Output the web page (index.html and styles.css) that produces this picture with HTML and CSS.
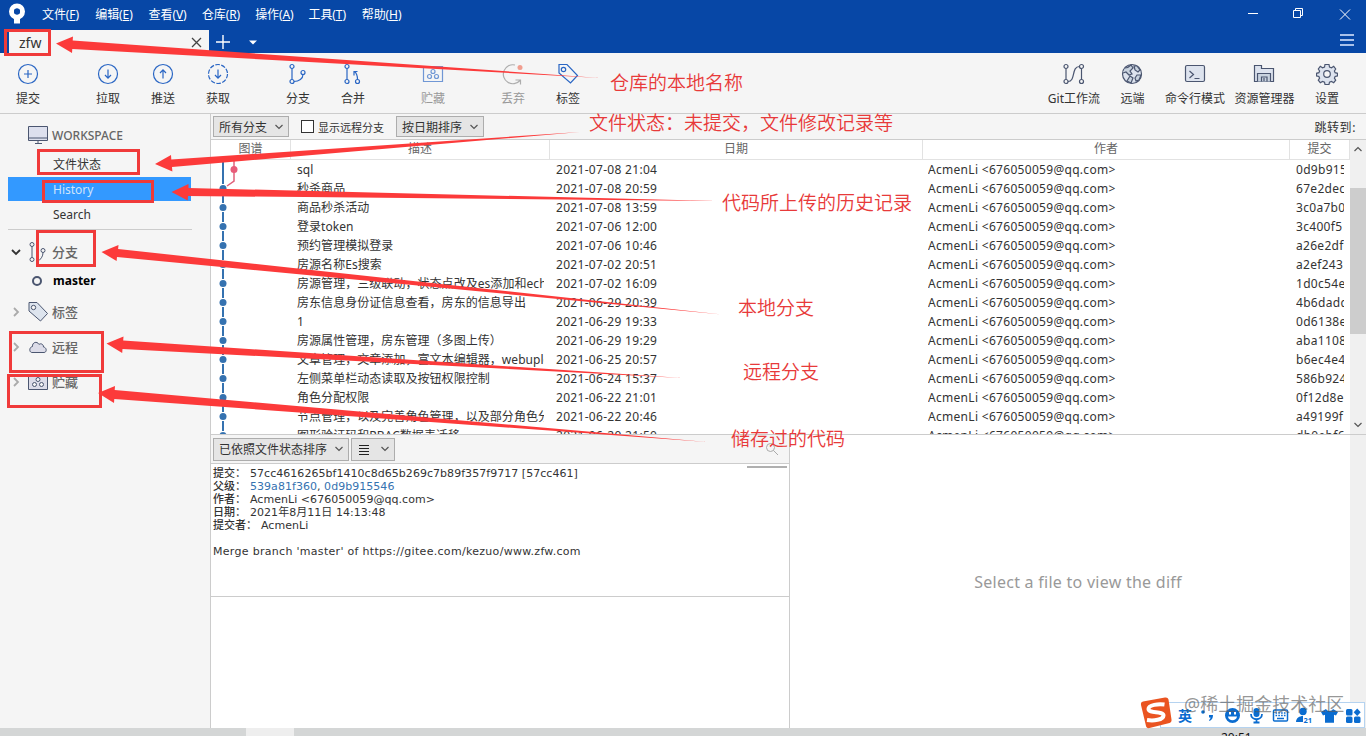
FILE: index.html
```
<!DOCTYPE html>
<html lang="zh-CN">
<head>
    <meta charset="UTF-8">
    <title>zfw</title>
    <link rel="stylesheet" href="styles.css">
    <script src="script.js" defer></script>
</head>
<body>
    <div class="titlebar">
        <svg class="logo" width="18" height="22" viewBox="0 0 18 22">
            <path d="M6 12h6v8.500h-6z" fill="#fff"/>
            <circle cx="9" cy="8.500" r="5.500" fill="none" stroke="#fff" stroke-width="5"/>
            <circle cx="9" cy="8.500" r="3" fill="#0747a6"/>
        </svg>
        <div class="menu">
            <span>文件(<u>F</u>)</span>
            <span>编辑(<u>E</u>)</span>
            <span>查看(<u>V</u>)</span>
            <span>仓库(<u>R</u>)</span>
            <span>操作(<u>A</u>)</span>
            <span>工具(<u>T</u>)</span>
            <span>帮助(<u>H</u>)</span>
        </div>
        <svg class="window-buttons" width="110" height="30" viewBox="0 0 110 30" fill="none" stroke="#fff">
            <path d="M0 14.500h10"/>
            <path d="M45.500 11.500h7v7h-7zM47.500 11.500v-2h7v7h-2"/>
            <path d="M92 10.500l10 10M102 10.500l-10 10"/>
        </svg>
    </div>
    <div class="tabs">
        <div class="tab">
            <span>zfw</span>
            <svg width="11" height="11" viewBox="0 0 11 11" stroke="#444" stroke-width="1.300"><path d="M1 1l9 9M10 1l-9 9"/></svg>
        </div>
        <svg class="tab-add" width="50" height="22" viewBox="0 0 50 22">
            <path d="M14 5v14M7 12h14" stroke="#fff" stroke-width="1.400"/>
            <path d="M40 10.500h8l-4 4z" fill="#fff"/>
        </svg>
        <svg class="burger" width="14" height="14" viewBox="0 0 14 14" stroke="#a9c1ea" stroke-width="1.800"><path d="M0 2h14M0 7h14M0 12h14"/></svg>
    </div>

    <div class="toolbar">
        <div class="group">
            <div class="tool"><svg viewBox="0 0 22 22"><circle cx="11" cy="11" r="9.500"/><path d="M11 7v8M7 11h8"/></svg>提交</div>
        </div>
        <div class="group">
            <div class="tool"><svg viewBox="0 0 22 22"><circle cx="11" cy="11" r="9.500"/><path d="M11 6.500v8.500M8 12l3 3.200 3-3.200"/></svg>拉取</div>
            <div class="tool"><svg viewBox="0 0 22 22"><circle cx="11" cy="11" r="9.500"/><path d="M11 15.500v-8.500M8 10l3-3.200 3 3.200"/></svg>推送</div>
            <div class="tool"><svg viewBox="0 0 22 22"><circle cx="11" cy="11" r="9.500" stroke-dasharray="4.500 1.470"/><path d="M11 6.500v8.500M8 12l3 3.200 3-3.200"/></svg>获取</div>
        </div>
        <div class="group">
            <div class="tool"><svg viewBox="0 0 22 22"><circle cx="5" cy="3.500" r="2"/><circle cx="5" cy="18.500" r="2"/><circle cx="16" cy="9.500" r="2"/><path d="M5 5.500v11M16 11.500c0 4-4 7-9 7"/></svg>分支</div>
            <div class="tool"><svg viewBox="0 0 22 22"><circle cx="5" cy="3.500" r="2"/><circle cx="5" cy="18.500" r="2"/><circle cx="15.500" cy="18.500" r="2"/><path d="M5 5.500v11M15.500 16.500c0-4-.5-6-3-8M12 12.500v-4h3.500"/></svg>合并</div>
        </div>
        <div class="group">
            <div class="tool disabled"><svg viewBox="0 0 22 22"><path d="M1.500 3.500h19v15h-19z"/><circle cx="11" cy="8.500" r="2"/><circle cx="7.500" cy="13.500" r="2"/><circle cx="14.500" cy="13.500" r="2"/></svg>贮藏</div>
        </div>
        <div class="group">
            <div class="tool disabled discard"><svg viewBox="0 0 22 22"><path d="M13 2a9.500 9.500 0 1 0 5 15.500M13.500 17h5v4.500"/><circle class="spot" cx="18" cy="4.500" r="2.500"/></svg>丢弃</div>
            <div class="tool"><svg viewBox="0 0 22 22"><path d="M2 1.500h8l10.500 11-7 7.500-11.500-10z"/><circle cx="6.500" cy="6.500" r="2.200"/></svg>标签</div>
        </div>
        <div class="group right">
            <div class="tool"><svg viewBox="0 0 22 22"><circle cx="3" cy="3.500" r="2"/><circle cx="3" cy="18.500" r="2"/><circle cx="18.500" cy="3.500" r="2"/><circle cx="18.500" cy="18.500" r="2"/><path d="M3 5.500v11M18.500 5.500v11M5 18.500c8 0 3-15 11.500-15"/></svg>Git工作流</div>
            <div class="tool"><svg viewBox="0 0 22 22"><circle class="soft" cx="11" cy="11" r="9.500"/><path class="land" d="M4 5c2 0 4-1 6-3l2 3-3 3 2 3-3 1-3-3-3 1M13 3l3 0 3 4-2 2-3-2zM16 12l4 0-2 5-3 1-1-3zM9 13l3 2-2 5-4-2z"/></svg>远端</div>
            <div class="tool"><svg viewBox="0 0 22 22"><rect class="soft" x="1.500" y="2.500" width="19" height="16" rx="1.500"/><path d="M5.500 8l4 3.500-4 3.500M10.500 15.500h5"/></svg>命令行模式</div>
            <div class="tool"><svg viewBox="0 0 22 22"><path class="soft" d="M1.500 2.500h7v3h12v13h-19z"/><path class="land" d="M4.500 18.500v-8h13v8M8.500 18.500v-4.500h5.500v4.500M11 15v3"/></svg>资源管理器</div>
            <div class="tool"><svg viewBox="0 0 22 22"><path class="soft" d="M9 1.500h4l.5 2.500 2 .8 2.200-1.500 2 2.700-1.300 2 .7 1.700 2.400.6v2.600l-2.400.6-.7 1.700 1.300 2-2 2.500-2.200-1.300-2 .8-.5 2.300h-4l-.5-2.300-2-.8-2.200 1.300-2-2.500 1.300-2-.7-1.700-2.400-.6v-2.600l2.400-.6.7-1.700-1.300-2 2-2.700 2.200 1.500 2-.8z"/><circle cx="11" cy="11" r="3.300" fill="#f5f5f5"/></svg>设置</div>
        </div>
    </div>

    <div class="main">
        <div class="sidebar">
            <div class="side-head workspace">
                <svg width="22" height="20" viewBox="0 0 22 20" fill="#dde0ee" stroke="#4b5670"><path d="M1.500 1.500h19v14h-19z"/><path d="M1.500 13h19M8 18.500h7M11 16v2"/></svg>
                WORKSPACE
            </div>
            <div class="side-item">文件状态</div>
            <div class="side-item selected">History</div>
            <div class="side-item">Search</div>
            <div class="side-line"></div>
            <div class="side-head first">
                <svg class="chevron open" width="10" height="8" viewBox="0 0 10 8"><path d="M1 2l4 4 4-4"/></svg>
                <svg width="22" height="22" viewBox="0 0 22 22" fill="none" stroke="#4b5670"><circle cx="5" cy="3.500" r="2"/><circle cx="5" cy="18.500" r="2"/><circle cx="16" cy="9.500" r="2"/><path d="M5 5.500v11M16 11.500c0 4-2 6-4 8"/></svg>
                分支
            </div>
            <div class="side-item master"><i></i>master</div>
            <div class="side-head">
                <svg class="chevron" width="10" height="10" viewBox="0 0 10 10"><path d="M3 1l4 4-4 4"/></svg>
                <svg width="22" height="22" viewBox="0 0 22 22" fill="#dde4ee" stroke="#4b5670"><path d="M2 1.500h8l10.500 11-7 7.500-11.500-10z"/><circle cx="6.500" cy="6.500" r="2.200" fill="#f5f5f5"/></svg>
                标签
            </div>
            <div class="side-head">
                <svg class="chevron" width="10" height="10" viewBox="0 0 10 10"><path d="M3 1l4 4-4 4"/></svg>
                <svg width="22" height="22" viewBox="0 0 22 22" fill="#dcdce8" stroke="#4b5670"><path d="M5 16.500h12c3 0 3-5-.5-5.500 0-3-3-4-4.500-2.500-2-4-7-2-6.500 2-3.500.5-3.500 6-.5 6z"/></svg>
                远程
            </div>
            <div class="side-head">
                <svg class="chevron" width="10" height="10" viewBox="0 0 10 10"><path d="M3 1l4 4-4 4"/></svg>
                <svg width="22" height="22" viewBox="0 0 22 22" fill="#dcdce8" stroke="#4b5670"><path d="M1.500 3.500h19v15h-19z"/><g fill="#f5f5f5"><circle cx="11" cy="8.500" r="2"/><circle cx="7.500" cy="13.500" r="2"/><circle cx="14.500" cy="13.500" r="2"/></g></svg>
                贮藏
            </div>
        </div>

        <div class="content">
            <div class="filters">
                <div class="select all">所有分支<svg viewBox="0 0 8 6"><path d="M.5 1l3.500 3.500 3.500-3.500"/></svg></div>
                <div class="check"><i></i>显示远程分支</div>
                <div class="select sort">按日期排序<svg viewBox="0 0 8 6"><path d="M.5 1l3.500 3.500 3.500-3.500"/></svg></div>
                <span class="jump">跳转到:</span>
            </div>
            <div class="log">
                <div class="log-table">
                    <div class="log-row log-header">
                        <span>图谱</span><span>描述</span><span>日期</span><span>作者</span><span>提交</span>
                    </div>
                    <div class="log-body" id="log"></div>
                </div>
                <div class="scrollbar">
                    <svg viewBox="0 0 8 6"><path d="M.5 5l3.500-3.500 3.500 3.500"/></svg>
                    <div class="thumb"></div>
                    <svg viewBox="0 0 8 6"><path d="M.5 1l3.500 3.500 3.500-3.500"/></svg>
                </div>
            </div>
            <div class="bottom">
                <div class="details">
                    <div class="details-bar">
                        <div class="select status">已依照文件状态排序<svg viewBox="0 0 8 6"><path d="M.5 1l3.500 3.500 3.500-3.500"/></svg></div>
                        <div class="select lines"><svg class="list" viewBox="0 0 10 11"><path d="M0 1.500h10M0 4.500h10M0 7.500h10M0 10.500h10"/></svg><svg viewBox="0 0 8 6"><path d="M.5 1l3.500 3.500 3.500-3.500"/></svg></div>
                        <svg class="search" width="14" height="14" viewBox="0 0 14 14" fill="none" stroke="#aaa"><circle cx="5.500" cy="5.500" r="4"/><path d="M8.500 8.500l4.500 4.500"/></svg>
                    </div>
                    <div class="commit">
                        <div><b>提交：</b>57cc4616265bf1410c8d65b269c7b89f357f9717 [57cc461]</div>
                        <div><b>父级：</b><a>539a81f360</a>, <a>0d9b915546</a></div>
                        <div><b>作者：</b>AcmenLi &lt;676050059@qq.com&gt;</div>
                        <div><b>日期：</b>2021年8月11日 14:13:48</div>
                        <div><b class="wide">提交者：</b>AcmenLi</div>
                        <div class="message">Merge branch 'master' of https://gitee.com/kezuo/www.zfw.com</div>
                        <i class="grip"></i>
                    </div>
                    <div class="files"></div>
                </div>
                <div class="diff">Select a file to view the diff</div>
                <div class="diff-track"></div>
            </div>
        </div>
    </div>

    <div class="taskbar"><div class="task"></div><span class="clock">20:51</span></div>

    <!-- input method bar -->
    <div class="ime">
        <span>英</span>
        <svg width="17" height="17" viewBox="0 0 17 17"><circle cx="4" cy="5" r="1.800"/><path d="M10 8h4c0 3-1 5-3.500 6l-.5-1c1-.7 1.500-1.500 1.500-2.500h-1.500z"/></svg>
        <svg width="17" height="17" viewBox="0 0 17 17"><circle cx="8.500" cy="8.500" r="7.500"/><path d="M4 9.500h9c-.5 5-8.500 5-9 0zM5 5h2v2.500h-2zM10 5h2v2.500h-2z" fill="#fff"/></svg>
        <svg width="17" height="17" viewBox="0 0 17 17"><rect x="5.500" y="1" width="6" height="9" rx="3"/><path d="M3 7c0 7 11 7 11 0M8.500 12v4M5.500 15.500h6" fill="none" stroke="#0a6cd0" stroke-width="1.800"/></svg>
        <svg width="17" height="17" viewBox="0 0 17 17"><rect x="1.500" y="3" width="14" height="11" rx="1" fill="none" stroke="#0a6cd0" stroke-width="1.500"/><path d="M3.500 6h10M3.500 8.500h10" stroke="#0a6cd0" stroke-width="1.500" stroke-dasharray="1.600 1.200"/><path d="M5 11.500h7" stroke="#0a6cd0" stroke-width="1.500"/></svg>
        <svg width="17" height="17" viewBox="0 0 17 17"><circle cx="7" cy="4.500" r="3.700"/><path d="M0 15c0-8 14-8 14 0z"/><rect x="7" y="8.500" width="10" height="8" fill="#fff"/><text x="7.500" y="15.500" font-size="7.500" font-weight="bold">21</text></svg>
        <svg width="17" height="17" viewBox="0 0 17 17"><path d="M5 2c1 2.500 6 2.500 7 0l5 3-2 3.500-2-.8v8h-9v-8l-2 .8-2-3.500z"/></svg>
        <svg width="17" height="17" viewBox="0 0 17 17"><rect x="1" y="2" width="6.500" height="6.500" rx="1.500"/><rect x="1" y="9.500" width="6.500" height="6.500" rx="1.500"/><rect x="9" y="9.500" width="6.500" height="6.500" rx="1.500"/><path d="M12.200 1.500l3.500 3.700-3.500 3.700-3.500-3.700z"/></svg>
    </div>
    <svg class="sogou" width="32" height="32" viewBox="0 0 32 32">
        <path d="M3 4.500l22-4c2-.3 3 .5 3.500 2l3 20c.3 2-.5 3-2 3.500l-20 5c-2 .5-3-.3-3.500-2l-5-21c-.3-2 .5-3.200 2-3.500z" fill="#ea5421"/>
        <path d="M24.500 7.500c-6-.8-16 .2-16 4.500 0 4.500 15 2 15 6.500-.3 4.500-10 5.500-16.500 4.500" fill="none" stroke="#fff" stroke-width="4"/>
    </svg>
    <div class="watermark">@稀土掘金技术社区</div>

    <!-- annotations -->
    <svg class="arrows" width="1366" height="736" viewBox="0 0 1366 736">
        <g fill="none" stroke="#f03a3a" stroke-width="3">
            <rect x="5.500" y="30.500" width="44" height="24"/>
            <rect x="38.500" y="150.500" width="100" height="23"/>
            <rect x="43.500" y="181.500" width="109" height="20"/>
            <rect x="37.500" y="231.500" width="57" height="34"/>
            <rect x="10.500" y="332.500" width="92" height="39"/>
            <rect x="8.500" y="375.500" width="92" height="31"/>
        </g>
        <g fill="#fc3a3a">
            <path d="M56 43.500l17-7-.3 4L600 78 72.300 49l-.3 4z"/>
            <path d="M155 164l16-9 .3 4.500L580 132 172 167l.4 4.500z"/>
            <path d="M171.500 192l17-8v4L717 201l-529-5-.3 4.500z"/>
            <path d="M101.500 252l17-7-.4 4L722 314.500 117 257l-.4 4z"/>
            <path d="M106.500 343.500l17-7-.3 4L682 378 122.500 349l-.3 4z"/>
            <path d="M98 393l17-7-.3 4L707 442 114.300 399l-.3 4z"/>
        </g>
    </svg>
    <div class="note n1">仓库的本地名称</div>
    <div class="note n2">文件状态：未提交，文件修改记录等</div>
    <div class="note n3">代码所上传的历史记录</div>
    <div class="note n4">本地分支</div>
    <div class="note n5">远程分支</div>
    <div class="note n6">储存过的代码</div>
</body>
</html>
```
FILE: script.js
```
var commits = [
    ['sql', '2021-07-08 21:04', '0d9b915'],
    ['秒杀商品', '2021-07-08 20:59', '67e2dec'],
    ['商品秒杀活动', '2021-07-08 13:59', '3c0a7b0'],
    ['登录token', '2021-07-06 12:00', '3c400f5'],
    ['预约管理模拟登录', '2021-07-06 10:46', 'a26e2df'],
    ['房源名称Es搜索', '2021-07-02 20:51', 'a2ef243'],
    ['房源管理，三级联动，状态点改及es添加和echarts', '2021-07-02 16:09', '1d0c54e'],
    ['房东信息身份证信息查看，房东的信息导出', '2021-06-29 20:39', '4b6dadd'],
    ['1', '2021-06-29 19:33', '0d6138e'],
    ['房源属性管理，房东管理（多图上传）', '2021-06-29 19:29', 'aba1108'],
    ['文章管理，文章添加，富文本编辑器，webuploader', '2021-06-25 20:57', 'b6ec4e4'],
    ['左侧菜单栏动态读取及按钮权限控制', '2021-06-24 15:37', '586b924'],
    ['角色分配权限', '2021-06-22 21:01', '0f12d8e'],
    ['节点管理，以及完善角色管理，以及部分角色分配', '2021-06-22 20:46', 'a49199f'],
    ['图形验证码和RBAC数据表迁移', '2021-06-20 21:50', 'db0ebf6']
];

// one graph cell per row, the first commit sits on the side branch
function graph(i) {
    if (i === 0) {
        return '<svg width="40" height="19"><path d="M12 2v17" stroke="#3572b0" stroke-width="2"/>' +
            '<path d="M23 0v19" stroke="#e0607a" stroke-width="1.500"/><circle cx="23" cy="9.500" r="3.500" fill="#e85c79"/></svg>';
    }
    var side = i === 1 ? '<path d="M23 0v2l-7 5" fill="none" stroke="#e0607a" stroke-width="1.500"/>' : '';
    return '<svg width="40" height="19"><path d="M12 0v5M12 14v5" stroke="#3572b0" stroke-width="2"/>' + side +
        '<circle cx="12" cy="9.500" r="3.500" fill="#3572b0"/></svg>';
}

var html = '';
commits.forEach(function(c, i) {
    html += '<div class="log-row"><span class="graph">' + graph(i) + '</span><span class="desc">' + c[0] + '</span><span>' + c[1] +
        '</span><span class="author">AcmenLi &lt;676050059@qq.com&gt;</span><span>' + c[2] + '</span></div>';
});
document.getElementById('log').innerHTML = html;
```
FILE: styles.css
```
* {
    box-sizing: border-box;
}
body {
    margin: 0;
    width: 1366px;
    height: 736px;
    overflow: hidden;
    position: relative;
    display: flex;
    flex-direction: column;
    font-family: "Noto Sans", "Noto Sans CJK SC", sans-serif;
    font-size: 12px;
    color: #333;
    background: #f5f5f5;
}
svg {
    flex: none;
}
.titlebar {
    height: 30px;
    flex: none;
    display: flex;
    align-items: center;
    background: #0747a6;
    color: #fff;
    padding: 0 14px 2px 8px;
}
.menu {
    display: flex;
    margin-left: 16px;
}
.menu span {
    width: 53.300px;
    letter-spacing: -0.100px;
}
.window-buttons {
    margin-left: auto;
    margin-right: -6px;
}
.tabs {
    height: 23px;
    flex: none;
    display: flex;
    background: #0747a6;
    padding-left: 9px;
}
.tab {
    width: 200px;
    background: #f5f5f5;
    display: flex;
    justify-content: space-between;
    align-items: center;
    padding: 2px 7px 0 10px;
    font-size: 14px;
}
.burger {
    margin: 3px 12px 0 auto;
}
.toolbar {
    height: 61px;
    flex: none;
    display: flex;
    gap: 25px;
    padding: 10px 16px 0 0.500px;
    border-bottom: 1px solid #ccc;
}
.group {
    display: flex;
}
.tool {
    width: 55px;
    display: flex;
    flex-direction: column;
    align-items: center;
    line-height: 18px;
    gap: 5px;
}
.tool svg {
    width: 22px;
    height: 22px;
    fill: none;
    stroke: #2a66c4;
    stroke-width: 1.200;
}
.disabled {
    color: #999;
}
.disabled svg {
    opacity: 0.650;
}
.discard svg {
    stroke: #888;
}
.tool .spot {
    fill: #f0705a;
    stroke: none;
}
.right {
    margin-left: auto;
    gap: 9.500px;
}
.right .tool {
    width: auto;
    min-width: 46px;
    white-space: nowrap;
}
.right svg {
    stroke: #4b5670;
}
.tool .soft {
    fill: #dde3ee;
}
.tool .land {
    fill: #c9d3df;
}
.main {
    flex: 1;
    min-height: 0;
    display: flex;
}
.sidebar {
    width: 211px;
    flex: none;
    border-right: 1px solid #ccc;
    padding-top: 11px;
}
.side-head {
    height: 35px;
    display: flex;
    align-items: center;
    padding-left: 11px;
    font-size: 13px;
    font-weight: 500;
    color: #666;
}
.side-head svg {
    margin-right: 3px;
}
.side-head .chevron {
    margin-right: 6px;
    fill: none;
    stroke: #aaa;
    stroke-width: 1.800;
}
.side-head .open {
    stroke: #333;
}
.workspace {
    height: 20px;
    padding-left: 27px;
    margin-bottom: 6px;
    font-size: 12px;
}
.first {
    margin-top: 4px;
}
.side-item {
    height: 26px;
    line-height: 28px;
    padding-left: 53px;
}
.selected {
    height: 24px;
    line-height: 26px;
    margin: 0 19px 0 8px;
    padding-left: 45px;
    background: #39f;
    color: #cfe4fb;
}
.side-line {
    margin: 2px 18px 0 8px;
    border-top: 1px solid #ccc;
}
.master {
    display: flex;
    align-items: center;
    padding-left: 32px;
    font-size: 12px;
    font-weight: bold;
    color: #000;
    height: 23px;
    line-height: 23px;
    margin-bottom: 2px;
}
.master i {
    width: 10px;
    height: 10px;
    border: 2px solid #4b5670;
    border-radius: 50%;
    margin-right: 11px;
}
.content {
    flex: 1;
    min-width: 0;
    display: flex;
    flex-direction: column;
}
.filters {
    height: 26px;
    flex: none;
    display: flex;
    align-items: center;
    padding: 0 10px 0 2px;
    border-bottom: 1px solid #ccc;
}
.select {
    height: 21px;
    display: flex;
    align-items: center;
    justify-content: space-between;
    padding: 0 5px;
    border: 1px solid #adadad;
    background: #e5e5e5;
    white-space: nowrap;
}
.select svg, .scrollbar svg {
    width: 8px;
    height: 6px;
    fill: none;
    stroke: #555;
    stroke-width: 1.200;
}
.all {
    width: 76px;
}
.sort {
    width: 88px;
}
.check {
    display: flex;
    align-items: center;
    font-size: 11px;
    margin: 0 12px;
}
.check i {
    width: 13px;
    height: 13px;
    border: 1px solid #333;
    background: #fff;
    margin-right: 4px;
}
.jump {
    margin-left: auto;
    letter-spacing: 0.600px;
}
.log {
    height: 295px;
    flex: none;
    display: flex;
    border-bottom: 1px solid #ccc;
    background: #fff;
}
.log-table {
    width: 1139px;
    display: flex;
    flex-direction: column;
}
.log-row {
    height: 19px;
    flex: none;
    display: grid;
    grid-template-columns: 80px 259px 373px 367px 60px;
    line-height: 19px;
    letter-spacing: 0.300px;
}
.log-row span {
    overflow: hidden;
    white-space: nowrap;
    margin: 0 6px;
}
.log-row .desc {
    letter-spacing: 0.050px;
}
.log-row .graph {
    margin: 0;
}
.log-row .author {
    margin-left: 5px;
}
.graph svg {
    display: block;
}
.log-header {
    height: 20px;
    line-height: 18px;
    color: #666;
    letter-spacing: 0;
    text-align: center;
    border-bottom: 1px solid #e2e2e2;
}
.log-header span {
    margin: 0;
    border-right: 1px solid #e2e2e2;
}
.log-body {
    flex: 1;
    min-height: 0;
    overflow: hidden;
}
.scrollbar {
    width: 16px;
    background: #f0f0f0;
    display: flex;
    flex-direction: column;
    justify-content: space-between;
    align-items: center;
    padding: 6px 0;
}
.thumb {
    width: 16px;
    height: 146px;
    background: #cdcdcd;
    margin-bottom: 52px;
}
.bottom {
    flex: 1;
    min-height: 0;
    display: flex;
    background: #fff;
}
.details {
    width: 579px;
    border-right: 1px solid #ccc;
    display: flex;
    flex-direction: column;
}
.details-bar {
    height: 29px;
    display: flex;
    align-items: center;
    gap: 2px;
    padding: 0 10px 0 2px;
    background: #f5f5f5;
    border-bottom: 1px solid #ccc;
}
.details-bar .select {
    height: 23px;
}
.status {
    width: 136px;
}
.lines {
    width: 44px;
    padding-left: 7px;
}
.select .list {
    width: 10px;
    height: 11px;
    stroke: #222;
    stroke-width: 1;
}
.search {
    margin-left: auto;
}
.commit {
    position: relative;
    height: 133px;
    padding: 3px 2px;
    border-bottom: 1px solid #ccc;
    font-family: "DejaVu Sans", "Noto Sans CJK SC", sans-serif;
    font-size: 11px;
    line-height: 13px;
    letter-spacing: 0.040px;
    color: #333;
}
.commit div {
    height: 13px;
    white-space: nowrap;
}
.commit b {
    display: inline-block;
    width: 37px;
    font-weight: 500;
    height: 13px;
}
.commit .wide {
    width: 48px;
}
.commit a {
    color: #3572b0;
}
.commit .message {
    margin-top: 13px;
    letter-spacing: 0.300px;
}
.grip {
    position: absolute;
    right: 2px;
    top: 2px;
    width: 40px;
    height: 2px;
    background: #b0b0b0;
}
.diff {
    flex: 1;
    display: flex;
    align-items: center;
    justify-content: center;
    padding-left: 16px;
    font-size: 16px;
    letter-spacing: 0.260px;
    color: #999;
}
.diff-track {
    width: 16px;
    background: #f0f0f0;
}
.taskbar {
    position: relative;
    height: 8px;
    flex: none;
    overflow: hidden;
    background: #d4d6d6;
}
.task {
    width: 48px;
    height: 8px;
    margin-left: 246px;
    background: #eee;
}
.clock {
    position: absolute;
    left: 1221px;
    top: 1px;
    color: #111;
}
.ime {
    position: absolute;
    left: 1160px;
    top: 702px;
    width: 205px;
    height: 26px;
    background: #fff;
    border: 1px solid #b5d3f0;
    display: flex;
    align-items: center;
    justify-content: space-between;
    padding: 0 2px 0 17px;
    color: #0a6cd0;
    fill: #0a6cd0;
    font-size: 14px;
    font-weight: bold;
}
.sogou {
    position: absolute;
    left: 1140px;
    top: 697px;
}
.watermark {
    position: absolute;
    left: 1184px;
    top: 691px;
    font-size: 18px;
    line-height: 26px;
    color: rgba(90, 90, 90, 0.650);
    white-space: nowrap;
}
.arrows {
    position: absolute;
    left: 0;
    top: 0;
}
.note {
    position: absolute;
    font-family: "Noto Sans CJK SC", sans-serif;
    font-size: 19px;
    line-height: 28px;
    font-weight: 350;
    color: #e83a3a;
    white-space: nowrap;
}
.n1 {
    left: 610px;
    top: 68px;
}
.n2 {
    left: 589px;
    top: 108px;
}
.n3 {
    left: 722px;
    top: 188px;
}
.n4 {
    left: 738px;
    top: 293px;
}
.n5 {
    left: 743px;
    top: 357px;
}
.n6 {
    left: 731px;
    top: 424px;
}
```
